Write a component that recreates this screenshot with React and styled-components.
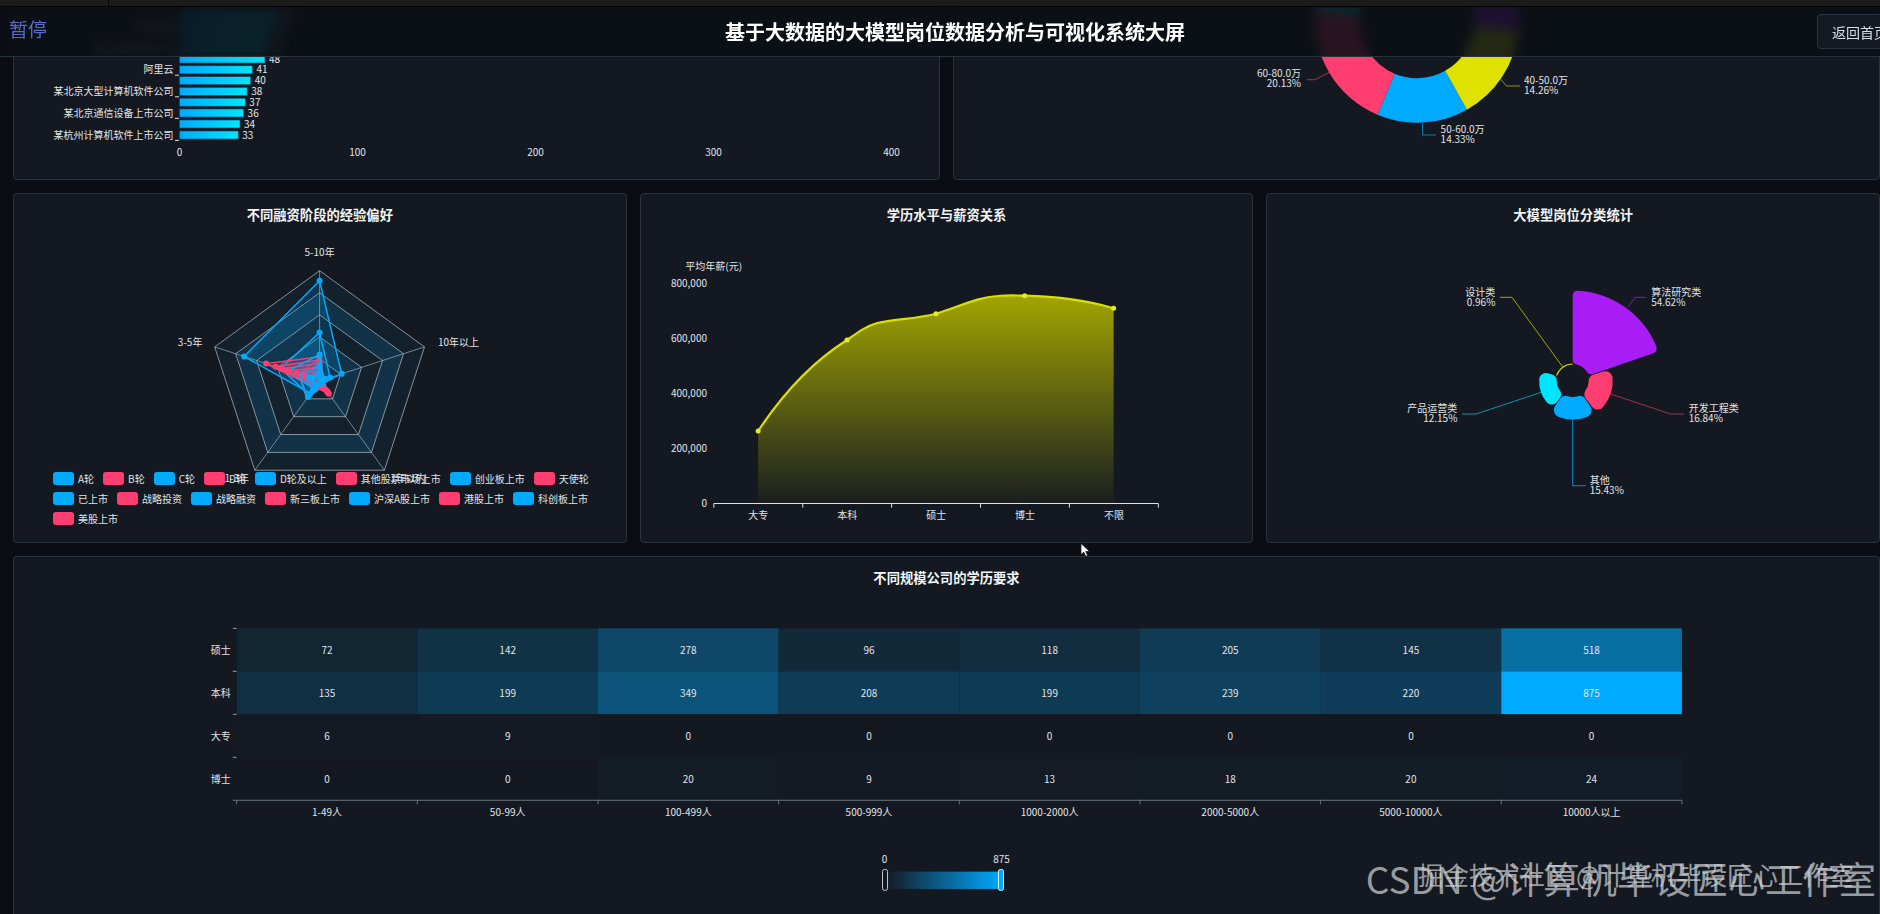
import React from 'react';
import styled, { createGlobalStyle } from 'styled-components';

const FONT = '"Noto Sans CJK SC", "Noto Sans", sans-serif';

const GlobalStyle = createGlobalStyle`
  html, body {
    margin: 0;
    height: 100%;
    background: #0a0e14;
    font-family: ${FONT};
    overflow: hidden;
  }
`;

const Screen = styled.div`
  position: relative;
  width: 1880px;
  height: 914px;
  overflow: hidden;
  display: flex;
  flex-direction: column;
  background: #0a0e14;
`;

const BrowserStrip = styled.div`
  height: 7px;
  flex: none;
  box-sizing: border-box;
  background: #1b1b1b;
  border-bottom: 1px solid #050505;
  display: flex;
`;

const StripTab = styled.div`
  width: 108px;
  border-right: 1px solid #050505;
`;

const Board = styled.main`
  position: relative;
  flex: 1;
  min-height: 0;
  display: flex;
  flex-direction: column;
  gap: 13px;
  padding-left: 13px;
`;

const TopBar = styled.header`
  position: absolute;
  top: 0;
  left: 0;
  width: 1910px;
  height: 50px;
  box-sizing: border-box;
  display: grid;
  grid-template-columns: 1fr auto 1fr;
  align-items: center;
  padding: 0 7px;
  background: rgba(10, 15, 21, 0.88);
  backdrop-filter: blur(6px);
  border-bottom: 1px solid #2a333c;
  z-index: 5;
`;

const TopTitle = styled.h1`
  grid-column: 2;
  margin: 0;
  font-size: 20px;
  font-weight: 700;
  line-height: 28px;
  color: #ffffff;
`;

const BackButton = styled.button`
  grid-column: 3;
  justify-self: end;
  height: 35px;
  padding: 0 14px;
  font-family: ${FONT};
  font-size: 14px;
  color: #d9dee4;
  background: #141a22;
  border: 1px solid #2b343e;
  border-radius: 4px;
`;

const PauseMark = styled.div`
  position: absolute;
  top: 17px;
  left: 9px;
  font-size: 19px;
  line-height: 24px;
  color: #5a6bc8;
  z-index: 6;
`;

const Row = styled.section`
  display: grid;
  flex: none;
  grid-template-columns: repeat(${(p) => p.$cols}, 1fr);
  gap: 13px;
  height: ${(p) => p.$height}px;
`;

const Card = styled.article`
  position: relative;
  min-width: 0;
  box-sizing: border-box;
  display: flex;
  flex-direction: column;
  background: #141921;
  border: 1px solid #2a323c;
  border-radius: 4px;
  overflow: hidden;
`;

const WideCard = styled(Card)`
  flex: 1;
  border-bottom: none;
  border-radius: 4px 4px 0 0;
`;

const CardTitle = styled.h2`
  flex: none;
  margin: 0;
  height: 32px;
  box-sizing: border-box;
  padding-top: 12px;
  text-align: center;
  font-size: 13.3px;
  line-height: 18px;
  font-weight: 700;
  color: #f2f4f6;
`;

const ChartSvg = styled.svg`
  display: block;
  flex: 1;
  min-height: 0;
  width: 100%;
`;

const Label = styled.text`
  font-family: ${FONT};
  font-size: 10px;
  fill: #e0e4e8;
  dominant-baseline: central;
`;

const Legend = styled.div`
  position: absolute;
  left: 39px;
  top: 274px;
  width: 545px;
  display: flex;
  flex-wrap: wrap;
`;

const LegendItem = styled.div`
  display: flex;
  align-items: center;
  height: 20px;
  margin-right: 9px;
  font-size: 10px;
  color: #e0e4e8;
  white-space: nowrap;
`;

const LegendSwatch = styled.i`
  width: 21px;
  height: 13px;
  margin-right: 4px;
  border-radius: 3px;
  background: ${(p) => p.$color};
`;

const WatermarkLarge = styled.div`
  position: absolute;
  right: 4px;
  top: 855px;
  font-size: 37px;
  line-height: 46px;
  white-space: nowrap;
  color: rgba(205, 208, 212, 0.72);
  z-index: 7;
`;

const WatermarkSmall = styled.div`
  position: absolute;
  right: 26px;
  top: 858px;
  font-size: 25.4px;
  line-height: 32px;
  white-space: nowrap;
  color: rgba(205, 208, 212, 0.72);
  z-index: 8;
`;

const Pointer = styled.svg`
  position: absolute;
  left: 1080px;
  top: 543px;
  z-index: 9;
`;

const BLUE = '#00aaff';
const PINK = '#ff3d71';
const TEAL = '#00e5ff';
const YELLOW = '#dfe200';
const PURPLE = '#a81cf5';

const rad = (d) => (d * Math.PI) / 180;
// angles are clockwise from twelve o'clock
const polar = (cx, cy, r, a) => [cx + r * Math.sin(rad(a)), cy - r * Math.cos(rad(a))];
const fmt = (p) => `${p[0].toFixed(2)} ${p[1].toFixed(2)}`;

function ringSlice(cx, cy, r0, r1, a0, a1) {
  const big = a1 - a0 > 180 ? 1 : 0;
  return `M${fmt(polar(cx, cy, r1, a0))} A${r1} ${r1} 0 ${big} 1 ${fmt(polar(cx, cy, r1, a1))} L${fmt(polar(cx, cy, r0, a1))} A${r0} ${r0} 0 ${big} 0 ${fmt(polar(cx, cy, r0, a0))} Z`;
}

// the round corners come from a thick stroke, so the path itself is inset
function roundSlice(cx, cy, r0, r1, a0, a1, rr) {
  const inner = r0 + rr;
  const outer = r1 - rr;
  const iOut = (rr / outer) * (180 / Math.PI);
  const iIn = (rr / inner) * (180 / Math.PI);
  return `M${fmt(polar(cx, cy, outer, a0 + iOut))} A${outer} ${outer} 0 0 1 ${fmt(polar(cx, cy, outer, a1 - iOut))} L${fmt(polar(cx, cy, inner, a1 - iIn))} A${inner} ${inner} 0 0 0 ${fmt(polar(cx, cy, inner, a0 + iIn))} Z`;
}

const BARS = [
  { v: 55, y: 15.8 },
  { v: 53, y: 26.6, name: '字节跳动' },
  { v: 50, y: 37.4 },
  { v: 49, y: 48.2, name: '某上海互联网公司' },
  { v: 48, y: 59 },
  { v: 41, y: 69.8, name: '阿里云' },
  { v: 40, y: 80.6 },
  { v: 38, y: 91.4, name: '某北京大型计算机软件公司' },
  { v: 37, y: 102.2 },
  { v: 36, y: 113, name: '某北京通信设备上市公司' },
  { v: 34, y: 124 },
  { v: 33, y: 135, name: '某杭州计算机软件上市公司' },
];

function CompanyChart() {
  return (
    <ChartSvg viewBox="14 8 925 171">
      <defs>
        <linearGradient id="barFill" x1="0" x2="1" y1="0" y2="0">
          <stop offset="0" stopColor={BLUE} />
          <stop offset="1" stopColor={TEAL} />
        </linearGradient>
      </defs>
      {BARS.map((b) => (
        <g key={b.y}>
          <rect x="179.5" y={b.y - 4} width={b.v * 1.78} height="8" fill="url(#barFill)" stroke="#0b4a63" strokeWidth="0.6" />
          <Label x={179.5 + b.v * 1.78 + 4} y={b.y - 1} fill="#fff">{b.v}</Label>
          {b.name && (
            <>
              <Label x="173.5" y={b.y - 1} textAnchor="end">{b.name}</Label>
              <path d={`M175 ${b.y + 5.4}H179`} stroke="#dfe3e7" strokeWidth="1" />
            </>
          )}
        </g>
      ))}
      {[0, 100, 200, 300, 400].map((t) => (
        <Label key={t} x={179.5 + t * 1.78} y="151" textAnchor="middle">{t}</Label>
      ))}
    </ChartSvg>
  );
}

function SalaryDonut() {
  const cx = 1417;
  const cy = 20.7;
  return (
    <ChartSvg viewBox="954 8 925 171">
      <path d={ringSlice(cx, cy, 57.5, 102, 150.7, 202.8)} fill={BLUE} />
      <path d={ringSlice(cx, cy, 57.5, 102, 96, 150.7)} fill={YELLOW} />
      <path d={ringSlice(cx, cy, 57.5, 102, 40, 96)} fill={PURPLE} />
      <path d={ringSlice(cx, cy, 57.5, 102, 202.8, 275.3)} fill={PINK} />
      <path d={ringSlice(cx, cy, 57.5, 102, 275.3, 320)} fill={TEAL} />
      <path d="M1307 79.7H1315L1330 72" fill="none" stroke={PINK} strokeOpacity="0.6" />
      <path d="M1500.5 79L1506.5 86H1520" fill="none" stroke={YELLOW} strokeOpacity="0.6" />
      <path d="M1422.6 122.7V135H1436" fill="none" stroke={BLUE} strokeOpacity="0.7" />
      <Label x="1301" y="72.5" textAnchor="end">60-80.0万</Label>
      <Label x="1301" y="82.5" textAnchor="end">20.13%</Label>
      <Label x="1524" y="79.5">40-50.0万</Label>
      <Label x="1524" y="89.5">14.26%</Label>
      <Label x="1440.6" y="128.5">50-60.0万</Label>
      <Label x="1440.6" y="138.5">14.33%</Label>
    </ChartSvg>
  );
}

const RADAR_CX = 319.6;
const RADAR_CY = 381;
const RADAR_R = 110.3;
const SPOKES = [0, 72, 144, 216, 288];

// values run top, right, lower right, lower left, left; later rows are drawn on top
const STAGE_SERIES = [
  { color: BLUE, vals: [0.91, 0.21, 0.03, 0.14, 0.72] },
  { color: BLUE, vals: [0.44, 0.1, 0.05, 0.16, 0.37] },
  { color: BLUE, vals: [0.15, 0.05, 0.06, 0.18, 0.2] },
  { color: PINK, vals: [0.22, 0.03, 0.14, 0.07, 0.51] },
  { color: PINK, vals: [0.19, 0.03, 0.12, 0.06, 0.42] },
  { color: PINK, vals: [0.16, 0.02, 0.14, 0.05, 0.36] },
  { color: BLUE, vals: [0.24, 0.04, 0.03, 0.09, 0.3] },
  { color: PINK, vals: [0.12, 0.02, 0.13, 0.06, 0.3] },
  { color: PINK, vals: [0.09, 0.02, 0.12, 0.05, 0.22] },
  { color: BLUE, vals: [0.14, 0.05, 0.04, 0.1, 0.16] },
  { color: BLUE, vals: [0.1, 0.06, 0.03, 0.07, 0.11] },
  { color: PINK, vals: [0.06, 0.02, 0.1, 0.05, 0.14] },
  { color: BLUE, vals: [0.07, 0.03, 0.02, 0.09, 0.07] },
  { color: BLUE, vals: [0.04, 0.03, 0.02, 0.05, 0.1] },
];

const STAGE_LEGEND = [
  'A轮', 'B轮', 'C轮', 'D轮', 'D轮及以上', '其他股票市场上市', '创业板上市', '天使轮',
  '已上市', '战略投资', '战略融资', '新三板上市', '沪深A股上市', '港股上市', '科创板上市', '美股上市',
];

const ringPoints = (scale) =>
  SPOKES.map((a) => fmt(polar(RADAR_CX, RADAR_CY, RADAR_R * scale, a))).join(' ');

function RadarSeries({ vals, color }) {
  const pts = vals.map((v, k) => polar(RADAR_CX, RADAR_CY, RADAR_R * v, SPOKES[k]));
  return (
    <g>
      <polygon points={pts.map(fmt).join(' ')} fill={color} fillOpacity="0.16" stroke={color} strokeWidth="1.5" />
      {pts.map((p, k) => <circle key={k} cx={p[0]} cy={p[1]} r="3" fill={color} />)}
    </g>
  );
}

function StageRadar() {
  return (
    <>
      <ChartSvg viewBox="14 226 611.67 316">
        {[5, 4, 3, 2, 1].map((n) => (
          <polygon
            key={n}
            points={ringPoints(n / 5)}
            fill={n % 2 === 0 ? '#123347' : '#13212d'}
            stroke="#b7c3cc"
            strokeOpacity="0.7"
          />
        ))}
        {SPOKES.map((a) => {
          const p = polar(RADAR_CX, RADAR_CY, RADAR_R, a);
          return <path key={a} d={`M${RADAR_CX} ${RADAR_CY}L${fmt(p)}`} stroke="#b7c3cc" strokeOpacity="0.6" />;
        })}
        {STAGE_SERIES.map((s, i) => <RadarSeries key={i} vals={s.vals} color={s.color} />)}
        <Label x="319.6" y="252" textAnchor="middle">5-10年</Label>
        <Label x="438" y="342">10年以上</Label>
        <Label x="202.4" y="342" textAnchor="end">3-5年</Label>
        <Label x="236.7" y="477.5" textAnchor="middle">1-3年</Label>
        <Label x="408" y="477.5" textAnchor="middle">1年以内</Label>
      </ChartSvg>
      <Legend>
        {STAGE_LEGEND.map((name, i) => (
          <LegendItem key={name}>
            <LegendSwatch $color={i % 2 === 0 ? BLUE : PINK} />
            {name}
          </LegendItem>
        ))}
      </Legend>
    </>
  );
}

const SALARY_LINE =
  'M757.8 431C785 390 815 360 846.7 340C858 332 866 326 877 323C895 319 915 319 935.7 313.7C960 306 978 297 997 296C1010 295 1015 295.5 1024.3 295.7C1060 296.5 1085 300 1113.3 308.3';
const SALARY_POINTS = [[757.8, 431], [846.7, 340], [935.7, 313.7], [1024.3, 295.7], [1113.3, 308.3]];
const DEGREE_NAMES = ['大专', '本科', '硕士', '博士', '不限'];
const SALARY_TICKS = [['800,000', 282.7], ['600,000', 337.7], ['400,000', 392.7], ['200,000', 447.3], ['0', 502]];

function SalaryArea() {
  return (
    <ChartSvg viewBox="640.67 226 611.67 316">
      <defs>
        <linearGradient id="salaryFill" gradientUnits="userSpaceOnUse" x1="0" x2="0" y1="295" y2="503">
          <stop offset="0" stopColor="#a2a500" />
          <stop offset="1" stopColor="#a2a500" stopOpacity="0.04" />
        </linearGradient>
      </defs>
      <path d={`${SALARY_LINE}V503H757.8Z`} fill="url(#salaryFill)" />
      <path d={SALARY_LINE} fill="none" stroke="#d8e000" strokeWidth="2.2" />
      {SALARY_POINTS.map((p) => (
        <circle key={p[0]} cx={p[0]} cy={p[1]} r="2.5" fill="#e4ec2a" />
      ))}
      <Label x="685" y="265">平均年薪(元)</Label>
      <path d="M713.5 507.7V503.5H1158V507.7M802.4 503.5V507.7M891.3 503.5V507.7M980.2 503.5V507.7M1069.1 503.5V507.7" fill="none" stroke="#dfe3e7" />
      {SALARY_TICKS.map(([t, y]) => (
        <Label key={t} x="706.7" y={y} textAnchor="end">{t}</Label>
      ))}
      {DEGREE_NAMES.map((n, i) => (
        <Label key={n} x={758 + i * 88.9} y="514" textAnchor="middle">{n}</Label>
      ))}
    </ChartSvg>
  );
}

function JobRose() {
  const cx = 1573;
  const cy = 381;
  return (
    <ChartSvg viewBox="1267.33 226 611.67 316">
      <g strokeLinejoin="round">
        <path d={roundSlice(cx, cy, 17, 90.5, 0, 71, 5)} fill={PURPLE} stroke={PURPLE} strokeWidth="10" />
        <path d={roundSlice(cx, cy, 16, 40, 73, 143, 7)} fill={PINK} stroke={PINK} strokeWidth="14" />
        <path d={roundSlice(cx, cy, 16, 38.5, 145, 215, 7)} fill={BLUE} stroke={BLUE} strokeWidth="14" />
        <path d={roundSlice(cx, cy, 16, 33.5, 217, 287, 6.5)} fill={TEAL} stroke={TEAL} strokeWidth="13" />
      </g>
      <path d={ringSlice(cx, cy, 16.4, 17.6, 289, 360)} fill="#c6cc00" />
      <path d="M1628.5 306.7L1635.6 297.3H1646.7" fill="none" stroke={PURPLE} strokeOpacity="0.7" />
      <path d="M1500.4 297.3H1512.3L1563.3 367.3" fill="none" stroke="#b9be00" strokeOpacity="0.85" />
      <path d="M1611 394L1671 414H1684" fill="none" stroke={PINK} strokeOpacity="0.6" />
      <path d="M1573 419.3V485.7H1586.2" fill="none" stroke={BLUE} strokeOpacity="0.8" />
      <path d="M1462.4 414H1476.3L1541.5 392.3" fill="none" stroke={TEAL} strokeOpacity="0.6" />
      <Label x="1651.5" y="291.7">算法研究类</Label>
      <Label x="1651.5" y="301.7">54.62%</Label>
      <Label x="1495.7" y="291.7" textAnchor="end">设计类</Label>
      <Label x="1495.7" y="301.7" textAnchor="end">0.96%</Label>
      <Label x="1689" y="407.3">开发工程类</Label>
      <Label x="1689" y="417.3">16.84%</Label>
      <Label x="1590" y="479.3">其他</Label>
      <Label x="1590" y="489.7">15.43%</Label>
      <Label x="1457.7" y="407.3" textAnchor="end">产品运营类</Label>
      <Label x="1457.7" y="417.3" textAnchor="end">12.15%</Label>
    </ChartSvg>
  );
}

const SCALE_NAMES = ['1-49人', '50-99人', '100-499人', '500-999人', '1000-2000人', '2000-5000人', '5000-10000人', '10000人以上'];
const EDU_ROWS = [
  ['硕士', [72, 142, 278, 96, 118, 205, 145, 518]],
  ['本科', [135, 199, 349, 208, 199, 239, 220, 875]],
  ['大专', [6, 9, 0, 0, 0, 0, 0, 0]],
  ['博士', [0, 0, 20, 9, 13, 18, 20, 24]],
];
const CELL_W = 180.75;
const CELL_H = 43;
const GRID_X = 236.8;
const GRID_Y = 628.3;

function heatColor(v) {
  const t = v / 875;
  const mix = (a, b) => Math.round(a + (b - a) * t);
  return `rgb(${mix(20, 0)}, ${mix(25, 170)}, ${mix(33, 255)})`;
}

function EducationHeatmap() {
  const axisY = GRID_Y + CELL_H * 4;
  return (
    <ChartSvg viewBox="14 589 1866 325">
      <defs>
        <linearGradient id="rangeFill" x1="0" x2="1" y1="0" y2="0">
          <stop offset="0" stopColor={BLUE} stopOpacity="0" />
          <stop offset="1" stopColor={BLUE} />
        </linearGradient>
      </defs>
      {EDU_ROWS.map(([name, vals], r) => (
        <g key={name}>
          <path d={`M233 ${GRID_Y + r * CELL_H}H236.8`} stroke="#9aa3ab" />
          <Label x="230.8" y={GRID_Y + r * CELL_H + CELL_H / 2} textAnchor="end">{name}</Label>
          {vals.map((v, c) => (
            <g key={c}>
              <rect x={GRID_X + c * CELL_W} y={GRID_Y + r * CELL_H} width={CELL_W} height={CELL_H} fill={heatColor(v)} />
              <Label x={GRID_X + (c + 0.5) * CELL_W} y={GRID_Y + (r + 0.5) * CELL_H - 0.5} textAnchor="middle">{v}</Label>
            </g>
          ))}
        </g>
      ))}
      <path d={`M233 ${axisY}H${GRID_X + 8 * CELL_W}`} stroke="#6d757d" />
      {SCALE_NAMES.map((n, c) => (
        <g key={n}>
          <path d={`M${GRID_X + c * CELL_W} ${axisY}v4`} stroke="#6d757d" />
          <Label x={GRID_X + (c + 0.5) * CELL_W} y={axisY + 11} textAnchor="middle">{n}</Label>
        </g>
      ))}
      <path d={`M${GRID_X + 8 * CELL_W} ${axisY}v4`} stroke="#6d757d" />
      <Label x="885" y="859" textAnchor="middle">0</Label>
      <Label x="1002" y="859" textAnchor="middle">875</Label>
      <rect x="885" y="871.7" width="117" height="17.3" fill="url(#rangeFill)" />
      <rect x="883" y="869.5" width="5" height="21" rx="2" fill="#141921" stroke="#c7ccd1" />
      <rect x="999" y="869.5" width="5" height="21" rx="2" fill={BLUE} stroke="#d6f1ff" />
    </ChartSvg>
  );
}

export default function App() {
  return (
    <Screen>
      <GlobalStyle />
      <BrowserStrip>
        <StripTab />
      </BrowserStrip>
      <Board>
        <TopBar>
          <TopTitle>基于大数据的大模型岗位数据分析与可视化系统大屏</TopTitle>
          <BackButton>返回首页</BackButton>
        </TopBar>
        <Row $cols={2} $height={173}>
          <Card><CompanyChart /></Card>
          <Card><SalaryDonut /></Card>
        </Row>
        <Row $cols={3} $height={350}>
          <Card>
            <CardTitle>不同融资阶段的经验偏好</CardTitle>
            <StageRadar />
          </Card>
          <Card>
            <CardTitle>学历水平与薪资关系</CardTitle>
            <SalaryArea />
          </Card>
          <Card>
            <CardTitle>大模型岗位分类统计</CardTitle>
            <JobRose />
          </Card>
        </Row>
        <WideCard>
          <CardTitle>不同规模公司的学历要求</CardTitle>
          <EducationHeatmap />
        </WideCard>
      </Board>
      <PauseMark>暂停</PauseMark>
      <WatermarkLarge>CSDN @计算机毕设匠心工作室</WatermarkLarge>
      <WatermarkSmall>掘金技术社区 @计算机毕设匠心工作室</WatermarkSmall>
      <Pointer width="12" height="14" viewBox="0 0 12 14">
        <path d="M1 0.5V11.5L3.8 9.2L5.7 13.3L7.6 12.4L5.7 8.5H9.5Z" fill="#fff" stroke="#111" strokeWidth="0.7" />
      </Pointer>
    </Screen>
  );
}
